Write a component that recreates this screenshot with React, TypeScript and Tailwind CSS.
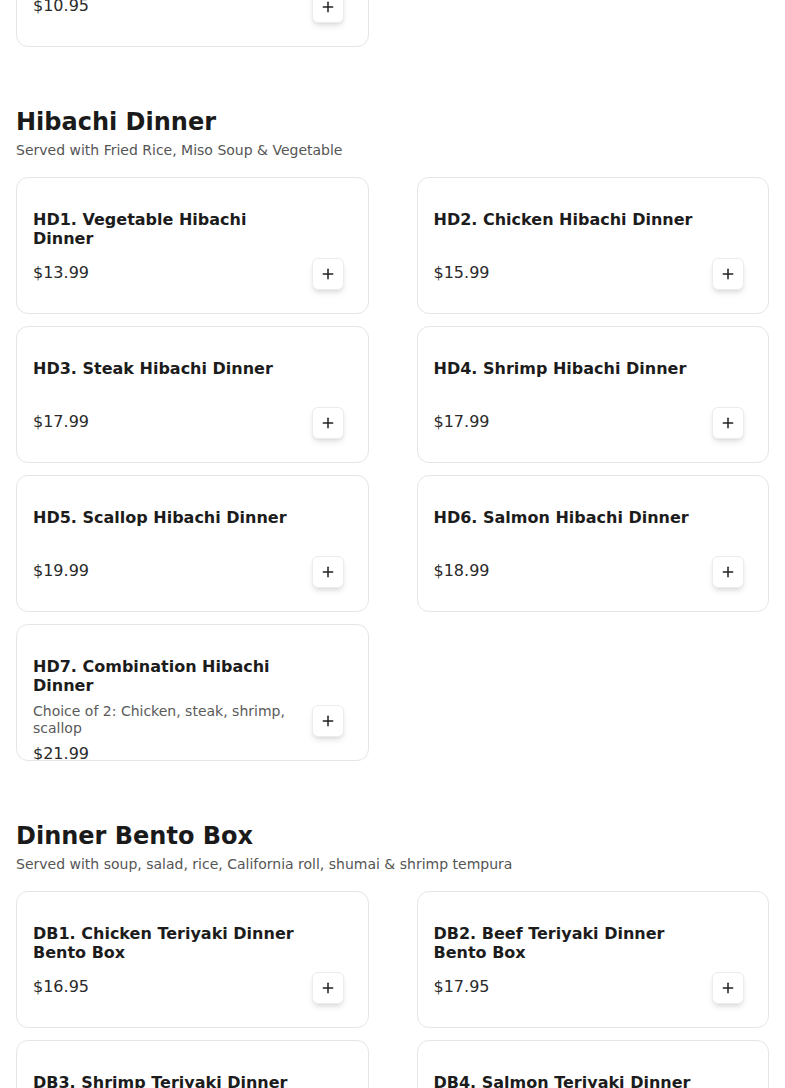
import React from 'react';
import { Plus } from 'lucide-react';

interface MenuItem {
  code: string;
  name: string;
  price: string;
  description?: string;
}

interface Section {
  title: string;
  subtitle: string;
  items: MenuItem[];
}

const SECTIONS: Section[] = [
  {
    title: 'Hibachi Dinner',
    subtitle: 'Served with Fried Rice, Miso Soup & Vegetable',
    items: [
      { code: 'HD1', name: 'Vegetable Hibachi Dinner', price: '$13.99' },
      { code: 'HD2', name: 'Chicken Hibachi Dinner', price: '$15.99' },
      { code: 'HD3', name: 'Steak Hibachi Dinner', price: '$17.99' },
      { code: 'HD4', name: 'Shrimp Hibachi Dinner', price: '$17.99' },
      { code: 'HD5', name: 'Scallop Hibachi Dinner', price: '$19.99' },
      { code: 'HD6', name: 'Salmon Hibachi Dinner', price: '$18.99' },
      {
        code: 'HD7',
        name: 'Combination Hibachi Dinner',
        price: '$21.99',
        description: 'Choice of 2: Chicken, steak, shrimp, scallop',
      },
    ],
  },
  {
    title: 'Dinner Bento Box',
    subtitle: 'Served with soup, salad, rice, California roll, shumai & shrimp tempura',
    items: [
      { code: 'DB1', name: 'Chicken Teriyaki Dinner Bento Box', price: '$16.95' },
      { code: 'DB2', name: 'Beef Teriyaki Dinner Bento Box', price: '$17.95' },
      { code: 'DB3', name: 'Shrimp Teriyaki Dinner Bento Box', price: '$18.95' },
      { code: 'DB4', name: 'Salmon Teriyaki Dinner Bento Box', price: '$18.95' },
    ],
  },
];

const ItemCard: React.FC<{ item: MenuItem }> = ({ item }) => (
  <div className="h-[137px] overflow-hidden rounded-xl border border-[#e5e5e5] bg-white px-4 pt-8">
    <div className="flex items-start gap-3">
      <div className="min-w-0 flex-1">
        <h3 className="min-h-[38px] text-base leading-[19px] font-bold text-[#1c1c1c]">
          {item.code}. {item.name}
        </h3>
        {item.description && (
          <p className="mt-2 text-sm leading-[17px] text-[#5a5a5a]">{item.description}</p>
        )}
        <p className={`${item.description ? 'mt-[5px]' : 'mt-[13px]'} text-base leading-6 text-[#2a2a2a]`}>
          {item.price}
        </p>
      </div>
      <div className="w-10 shrink-0">
        <button className="mt-[48px] flex h-8 w-8 items-center justify-center rounded-md border border-[#ececec] bg-white text-[#222] shadow-md">
          <Plus size={16} strokeWidth={2.25} />
        </button>
      </div>
    </div>
  </div>
);

export default function App() {
  return (
    <div className="min-h-screen bg-white px-4 pb-10 font-['DejaVu_Sans',sans-serif]">
      <div className="-mt-[90px] grid grid-cols-2 gap-x-12 gap-y-3">
        <ItemCard item={{ code: 'L10', name: 'Teriyaki Lunch Special Combo', price: '$10.95' }} />
      </div>

      {SECTIONS.map((section) => (
        <section key={section.title} className="mt-[59px]">
          <h2 className="text-2xl leading-8 font-bold text-[#1a1a1a]">{section.title}</h2>
          <p className="mt-0.5 text-sm leading-5 text-[#555]">{section.subtitle}</p>
          <div className="mt-[17px] grid grid-cols-2 gap-x-12 gap-y-3">
            {section.items.map((item) => (
              <ItemCard key={item.code} item={item} />
            ))}
          </div>
        </section>
      ))}
    </div>
  );
}
